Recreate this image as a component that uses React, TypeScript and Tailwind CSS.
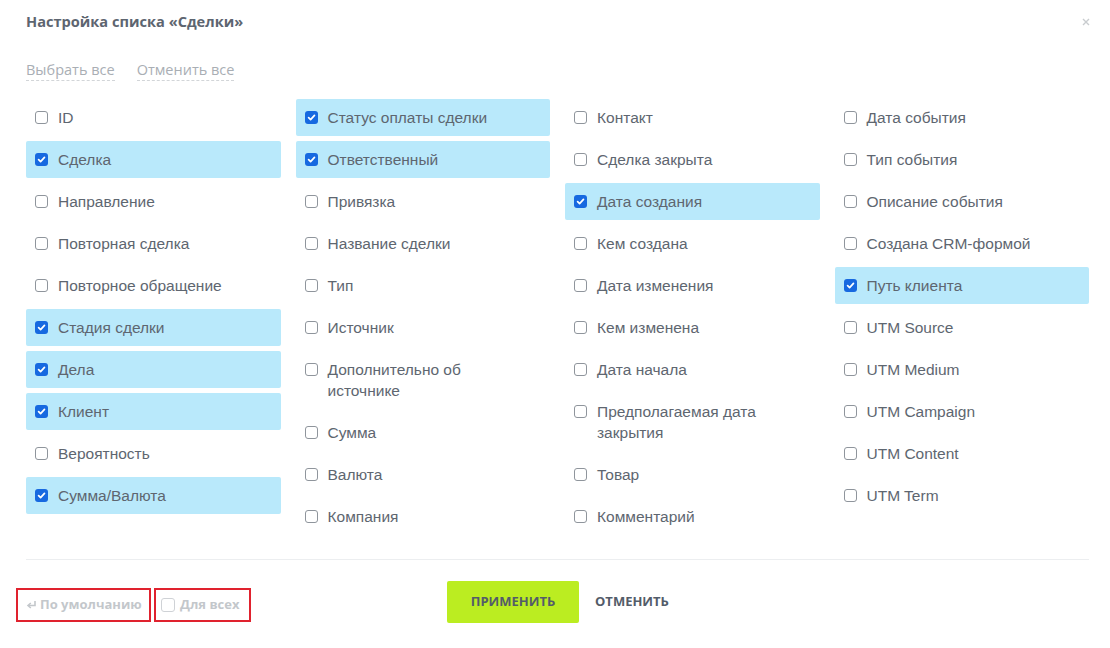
import React from "react";

type Item = { label: string; checked?: boolean };

const columns: Item[][] = [
  [
    { label: "ID" },
    { label: "Сделка", checked: true },
    { label: "Направление" },
    { label: "Повторная сделка" },
    { label: "Повторное обращение" },
    { label: "Стадия сделки", checked: true },
    { label: "Дела", checked: true },
    { label: "Клиент", checked: true },
    { label: "Вероятность" },
    { label: "Сумма/Валюта", checked: true },
  ],
  [
    { label: "Статус оплаты сделки", checked: true },
    { label: "Ответственный", checked: true },
    { label: "Привязка" },
    { label: "Название сделки" },
    { label: "Тип" },
    { label: "Источник" },
    { label: "Дополнительно об источнике" },
    { label: "Сумма" },
    { label: "Валюта" },
    { label: "Компания" },
  ],
  [
    { label: "Контакт" },
    { label: "Сделка закрыта" },
    { label: "Дата создания", checked: true },
    { label: "Кем создана" },
    { label: "Дата изменения" },
    { label: "Кем изменена" },
    { label: "Дата начала" },
    { label: "Предполагаемая дата закрытия" },
    { label: "Товар" },
    { label: "Комментарий" },
  ],
  [
    { label: "Дата события" },
    { label: "Тип события" },
    { label: "Описание события" },
    { label: "Создана CRM-формой" },
    { label: "Путь клиента", checked: true },
    { label: "UTM Source" },
    { label: "UTM Medium" },
    { label: "UTM Campaign" },
    { label: "UTM Content" },
    { label: "UTM Term" },
  ],
];

function Box({ checked, light }: { checked?: boolean; light?: boolean }) {
  if (checked) {
    return (
      <div className="flex h-[13px] w-[13px] shrink-0 items-center justify-center rounded-[3px] bg-[#1769e0]">
        <svg width="9" height="9" viewBox="0 0 10 10">
          <path d="M1.8 5.2 L4 7.3 L8.3 2.6" fill="none" stroke="#fff" strokeWidth="1.9" strokeLinecap="round" strokeLinejoin="round" />
        </svg>
      </div>
    );
  }
  return (
    <div
      className={
        light
          ? "h-[14px] w-[14px] shrink-0 rounded-[3px] border border-[#cfd2d6] bg-white"
          : "h-[13px] w-[13px] shrink-0 rounded-[3px] border border-[#8f959c] bg-white"
      }
    />
  );
}

function Row({ item }: { item: Item }) {
  return (
    <div
      className={
        "flex items-start gap-[10px] rounded-[2px] py-[8px] pl-[9px] pr-2 " +
        (item.checked ? "bg-[#b9e9fb]" : "")
      }
    >
      <div className="flex h-[21px] shrink-0 items-center">
        <Box checked={item.checked} />
      </div>
      <div className="max-w-[190px] text-[15.5px] leading-[21px] text-[#5e6670]">{item.label}</div>
    </div>
  );
}

export default function App() {
  return (
    <div
      className="relative h-[648px] w-[1110px] overflow-hidden bg-white"
      style={{ fontFamily: '"Liberation Sans", Arial, sans-serif' }}
    >
      <div className="flex items-center justify-between pl-[26px] pr-[20px] pt-[11px]">
        <h1
          className="text-[14.6px] font-bold leading-[20px] text-[#5d6570]"
          style={{ fontFamily: '"Open Sans", sans-serif' }}
        >
          Настройка списка «Сделки»
        </h1>
        <svg width="8" height="8" viewBox="0 0 8 8" className="mt-[2px]">
          <path d="M1 1 L7 7 M7 1 L1 7" stroke="#c9cccf" strokeWidth="1.4" />
        </svg>
      </div>

      <div
        className="mt-[29px] flex gap-[22px] pl-[26px] text-[14.5px] leading-[20px] text-[#a9aeb4]"
        style={{ fontFamily: '"Open Sans", sans-serif' }}
      >
        <span className="border-b border-dashed border-[#d2d5d8]">Выбрать все</span>
        <span className="border-b border-dashed border-[#d2d5d8]">Отменить все</span>
      </div>

      <div className="ml-[26px] mr-[21px] mt-[18px] grid grid-cols-4 gap-x-[15px]">
        {columns.map((col, i) => (
          <div key={i} className="flex flex-col gap-[5px]">
            {col.map((item) => (
              <Row key={item.label} item={item} />
            ))}
          </div>
        ))}
      </div>

      <div className="ml-[26px] mr-[21px] mt-[24px] border-t border-[#eceef0]" />

      <div
        className="mt-[21px] flex items-center pl-[16px]"
        style={{ fontFamily: '"Open Sans", sans-serif' }}
      >
        <div className="mt-[6px] flex items-center gap-[3px]">
          <div className="flex h-[34px] w-[135px] items-center gap-[3px] border-2 border-[#e0222e] pl-[8px] text-[13px] font-bold text-[#c3c7cb]">
            <svg width="11" height="10" viewBox="0 0 11 10">
              <path d="M9 1 V5.5 H2.5" fill="none" stroke="#c3c7cb" strokeWidth="1.6" />
              <path d="M4.8 3 L2 5.5 L4.8 8" fill="none" stroke="#c3c7cb" strokeWidth="1.6" />
            </svg>
            <span>По умолчанию</span>
          </div>
          <div className="flex h-[34px] w-[97px] items-center gap-[5px] border-2 border-[#e0222e] pl-[5px] text-[13px] font-bold text-[#c3c7cb]">
            <Box light />
            <span>Для всех</span>
          </div>
        </div>

        <button className="ml-[196px] flex h-[42px] w-[132px] items-center justify-center rounded-[2px] bg-[#bbed21] text-[13px] font-bold text-[#535c69]">
          ПРИМЕНИТЬ
        </button>
        <button className="ml-[16px] text-[13px] font-bold text-[#535c69]">ОТМЕНИТЬ</button>
      </div>
    </div>
  );
}
